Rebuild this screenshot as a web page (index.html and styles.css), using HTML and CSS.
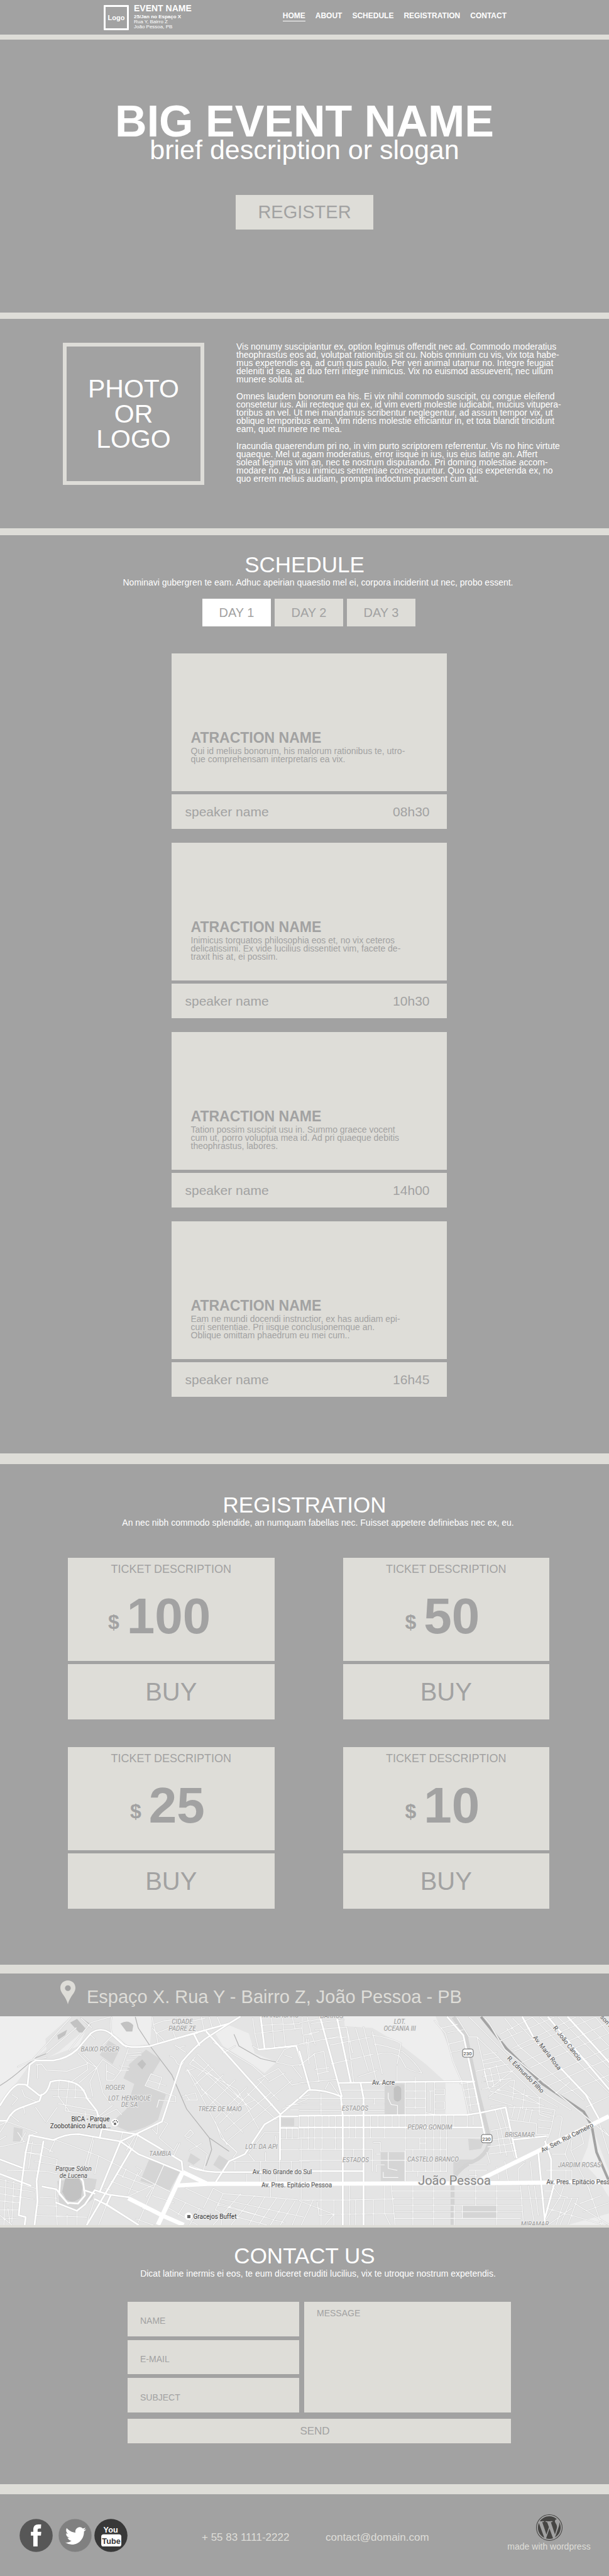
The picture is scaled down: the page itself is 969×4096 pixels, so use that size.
FILE: index.html
```html
<!DOCTYPE html>
<html lang="en">
<head>
<meta charset="utf-8">
<meta name="viewport" content="width=device-width, initial-scale=1">
<title>Big Event Name</title>
<link rel="stylesheet" href="styles.css">
</head>
<body>
<header class="site-header">
  <div class="brand">
    <div class="brand-logo">Logo</div>
    <div>
      <p class="brand-name">EVENT NAME</p>
      <p class="brand-info"><strong>25/Jan no Espaço X</strong><br>Rua Y, Bairro Z<br>João Pessoa, PB</p>
    </div>
  </div>
  <nav class="nav">
    <a class="nav-link nav-link-active" href="#home">HOME</a>
    <a class="nav-link" href="#about">ABOUT</a>
    <a class="nav-link" href="#schedule">SCHEDULE</a>
    <a class="nav-link" href="#registration">REGISTRATION</a>
    <a class="nav-link" href="#contact">CONTACT</a>
  </nav>
</header>
<main>
<section class="hero" id="home">
  <h1 class="hero-title">BIG EVENT NAME</h1>
  <p class="hero-slogan">brief description or slogan</p>
  <button class="hero-button" type="button">REGISTER</button>
</section>

<section class="about" id="about">
  <div class="about-photo">PHOTO<br>OR<br>LOGO</div>
  <div class="about-text">
    <p>Vis nonumy suscipiantur ex, option legimus offendit nec ad. Commodo moderatius<br>theophrastus eos ad, volutpat rationibus sit cu. Nobis omnium cu vis, vix tota habe-<br>mus expetendis ea, ad cum quis paulo. Per veri animal utamur no. Integre feugiat<br>deleniti id sea, ad duo ferri integre inimicus. Vix no euismod assueverit, nec ullum<br>munere soluta at.</p>
    <p>Omnes laudem bonorum ea his. Ei vix nihil commodo suscipit, cu congue eleifend<br>consetetur ius. Alii recteque qui ex, id vim everti molestie iudicabit, mucius vitupera-<br>toribus an vel. Ut mei mandamus scribentur neglegentur, ad assum tempor vix, ut<br>oblique temporibus eam. Vim ridens molestie efficiantur in, et tota blandit tincidunt<br>eam, quot munere ne mea.</p>
    <p>Iracundia quaerendum pri no, in vim purto scriptorem referrentur. Vis no hinc virtute<br>quaeque. Mel ut agam moderatius, error iisque in ius, ius eius latine an. Affert<br>soleat legimus vim an, nec te nostrum disputando. Pri doming molestiae accom-<br>modare no. An usu inimicus sententiae consequuntur. Quo quis expetenda ex, no<br>quo errem melius audiam, prompta indoctum praesent cum at.</p>
  </div>
</section>

<section class="schedule" id="schedule">
  <h2 class="heading">SCHEDULE</h2>
  <p class="subheading">Nominavi gubergren te eam. Adhuc apeirian quaestio mel ei, corpora inciderint ut nec, probo essent.</p>
  <div class="days">
    <button class="day day-active" type="button">DAY 1</button>
    <button class="day" type="button">DAY 2</button>
    <button class="day" type="button">DAY 3</button>
  </div>
  <div class="talks">
    <article class="talk">
      <div class="talk-body"><h3 class="talk-title">ATRACTION NAME</h3><p class="talk-text">Qui id melius bonorum, his malorum rationibus te, utro-<br>que comprehensam interpretaris ea vix.</p></div>
      <div class="talk-foot"><span>speaker name</span><time>08h30</time></div>
    </article>
    <article class="talk">
      <div class="talk-body"><h3 class="talk-title">ATRACTION NAME</h3><p class="talk-text">Inimicus torquatos philosophia eos et, no vix ceteros<br>delicatissimi. Ex vide lucilius dissentiet vim, facete de-<br>traxit his at, ei possim.</p></div>
      <div class="talk-foot"><span>speaker name</span><time>10h30</time></div>
    </article>
    <article class="talk">
      <div class="talk-body"><h3 class="talk-title">ATRACTION NAME</h3><p class="talk-text">Tation possim suscipit usu in. Summo graece vocent<br>cum ut, porro voluptua mea id. Ad pri quaeque debitis<br>theophrastus, labores.</p></div>
      <div class="talk-foot"><span>speaker name</span><time>14h00</time></div>
    </article>
    <article class="talk">
      <div class="talk-body"><h3 class="talk-title">ATRACTION NAME</h3><p class="talk-text">Eam ne mundi docendi instructior, ex has audiam epi-<br>curi sententiae. Pri iisque conclusionemque an.<br>Oblique omittam phaedrum eu mei cum..</p></div>
      <div class="talk-foot"><span>speaker name</span><time>16h45</time></div>
    </article>
  </div>
</section>

<section class="registration" id="registration">
  <h2 class="heading">REGISTRATION</h2>
  <p class="subheading">An nec nibh commodo splendide, an numquam fabellas nec. Fuisset appetere definiebas nec ex, eu.</p>
  <div class="tickets">
    <article class="ticket">
      <div class="ticket-body"><h3 class="ticket-title">TICKET DESCRIPTION</h3><p class="price price-long"><span class="currency">$</span>100</p></div>
      <button class="buy" type="button">BUY</button>
    </article>
    <article class="ticket">
      <div class="ticket-body"><h3 class="ticket-title">TICKET DESCRIPTION</h3><p class="price"><span class="currency">$</span>50</p></div>
      <button class="buy" type="button">BUY</button>
    </article>
    <article class="ticket">
      <div class="ticket-body"><h3 class="ticket-title">TICKET DESCRIPTION</h3><p class="price"><span class="currency">$</span>25</p></div>
      <button class="buy" type="button">BUY</button>
    </article>
    <article class="ticket">
      <div class="ticket-body"><h3 class="ticket-title">TICKET DESCRIPTION</h3><p class="price"><span class="currency">$</span>10</p></div>
      <button class="buy" type="button">BUY</button>
    </article>
  </div>
</section>

<section class="location">
  <div class="address">
    <svg class="pin" viewBox="0 0 78 134" preserveAspectRatio="none" aria-hidden="true"><path fill="#deddd8" fill-rule="evenodd" d="M39 0C17 0 0 18 0 41c0 20 12 33 22 51 9 16 14 28 17 42 3-14 8-26 17-42 10-18 22-31 22-51C78 18 61 0 39 0zm0 27a15 16 0 1 1 0 32 15 16 0 0 1 0-32z"/></svg>
    <p class="address-text">Espaço X. Rua Y - Bairro Z, João Pessoa - PB</p>
  </div>
  <svg class="map" viewBox="0 0 969 332" role="img" aria-label="Map of João Pessoa">
    <defs>
      <g id="west-minor">
        <path d="M170 570L360 340M235 540L385 400M350 525L460 370L560 338M410 345L465 400M90 615L170 575L235 563M565 340Q555 400 570 440L520 495M570 440Q600 450 640 510M455 435L480 460M770 338Q780 400 790 430L800 485M780 380L830 360L960 345M770 400L830 470M870 400L890 460M900 340L920 390M960 345L1000 430M1020 340L1035 420M1060 340L1075 400M1100 340L1120 390M800 485L1000 430M790 430L900 380L1040 345M885 495L940 535M895 515L935 500M860 555Q885 560 895 595Q915 620 930 590"/>
        <path d="M395 540L440 590L445 630L360 700M440 590L490 620L400 705M420 545L490 620L520 760L560 820M490 620L455 700L470 780M180 605L210 600L235 635L340 640L440 600M190 605L190 680M350 690L330 860M300 690L295 780L350 860M385 710L380 790M250 740L430 745M270 780L460 790M295 820L490 860M180 840L230 920M110 740L125 780L185 810M60 770L90 790L60 830M120 840L125 875M50 880L95 920M235 925L290 840M330 860L500 890M430 860L440 930"/>
        <path d="M640 540L715 535M650 555L715 550M640 580L680 575M610 610L655 618M610 635L650 635M650 515L610 640L575 690M490 620L520 575L610 640M540 600L540 690L575 690M540 640L580 660M500 890L570 830M510 895L590 850L615 880M765 655L820 675L800 740M750 690L840 720M765 655L735 720L860 770L890 780L890 810L850 805M795 840L805 800L850 805M630 430"/>
        <path d="M945 625L1150 1050M945 625L1060 790M960 600L1200 740M975 575L1225 800M1000 545L1270 850M940 640L985 625M1020 780L1130 660M1060 830L1190 690M1090 900L1250 730M1110 930L1340 680M1140 970L1370 760M1150 1030L1380 820M1080 480L1280 610L1360 690M1000 670L1060 600M980 720L1080 625M960 600L990 560M1060 790L1230 980M1200 740L1310 960M1020 740L1180 880M1150 870L1290 800M1040 650L1210 820M1090 920L1120 1010L1200 1090M1300 690L1410 625L1480 720M1360 700L1440 650M1250 760L1400 910M1130 540L1190 500M1370 790L1480 690M1310 690L1410 800M925 780L990 760L1000 800L940 800M940 770L960 800"/>
        <path d="M1280 345L1290 430L1310 520L1500 495L1568 485M1310 520L1280 500M1290 430L1530 400L1540 490M1375 340L1390 510M1430 340L1445 505M1480 340L1495 410M1530 340L1530 400M1320 385L1520 375M1400 590L1440 520L1500 495M1440 550L1480 565M1400 590L1480 610L1530 680M1480 610L1530 600M1560 460L1568 560M1430 850L1568 790M1450 830L1568 820M1470 855L1568 855M1510 790L1568 770M1480 715L1568 700"/>
        <path d="M0 1060L130 1030M130 1090L220 1110L290 1130L280 1200M280 1020L500 1110L880 1320M280 1020L250 1090M175 1140L290 1160L390 1170M165 1030L145 1180M210 1080L185 1240M140 1040L210 1050M140 1090L205 1100M220 1060L270 1090M0 980L35 920L0 940M35 920L190 980L140 1000M0 1020L30 1000M90 980L120 1030M130 980L105 1030M470 1010L420 1200M475 1020L440 1190M500 1110L480 1210M620 980L610 1030M690 990L640 1080M700 990L670 1075L640 1030M850 930L805 1010L880 1080L900 1040M850 930L830 920M770 960L795 990L800 930M935 1000L965 965L980 985L955 1010zM940 1010L1050 1100M960 1080L1020 1040M1050 1100L1030 1190L960 1160M880 1110L910 1040M1120 1010L1200 1090L1180 1120M1340 980L1260 1090M1340 980L1415 980M1345 1090L1345 1140M1260 1100L1290 1140M1395 1000L1400 1050"/>
        <path d="M0 1240L180 1290M0 1280L170 1310M0 1320L170 1350M0 1360L100 1370M0 1410L90 1410M0 1460L110 1455M35 1190L230 1195L290 1210M30 1240L20 1493M70 1250L60 1480M0 1440L60 1493M40 1400L50 1480M280 1300L290 1493M200 1340L290 1345M190 1385L290 1390M180 1440L440 1450M390 1415L390 1493M340 1440L340 1493M450 1450L440 1493M590 1210L780 1290M560 1250L700 1310M530 1290L560 1300M700 1200L650 1320M640 1180L620 1230M690 1170L720 1190L700 1220M830 1160L700 1480M780 1270L640 1340M770 1290L740 1340M540 1380L500 1493M480 1350L450 1450M500 1360L700 1493M770 1330L880 1370M720 1400L820 1440M690 1460L790 1500"/>
        <path d="M870 1335L1100 1450M840 1390L1000 1493M940 1370L900 1440M1010 1400L960 1493M1080 1290L1130 1320L1370 1340L1568 1360M940 1290L1100 1370L1400 1470M1080 1290L1030 1400M1130 1320L1090 1410Q1130 1420 1120 1493M1220 1320L1080 1493M1290 1330L1170 1493M1340 1340L1260 1493M1400 1345L1310 1493M1450 1350L1370 1493M1500 1350L1420 1493M1530 1360L1480 1493M1370 1340L1370 1280M1100 1380L1440 1480M1120 1350L1540 1450M1130 1430L1350 1493M1250 1210L1250 1260M1320 1210L1320 1260M1400 1210L1400 1260M1190 1140L1190 1190M1320 1140L1320 1200M1180 1140L1568 1140M1415 1015L1568 1015M1415 1075L1568 1075M1450 950L1450 1015M1480 950L1480 1015M1510 950L1510 1015M1540 950L1540 1015M1415 1130L1415 1200M1475 1140L1475 1200M1525 1020L1525 1350"/>
      </g>
      <g id="west-major">
        <path d="M0 830Q60 720 95 712L130 715L200 775Q240 770 255 700Q300 680 360 700Q420 715 440 790L490 860L515 960L505 1010M35 915Q60 860 100 845L200 805L210 770M0 915H35M140 715L150 605L180 580L270 580Q340 570 390 520L460 430Q510 390 560 430L620 490Q650 515 760 500L980 430L1160 375L1215 338"/>
        <path d="M130 1090L150 995L270 1022Q340 985 400 990L610 1030L820 920L920 590Q980 510 1040 460L1160 375M980 430L1010 495M1045 420L1420 880M515 960L690 990L920 1140L925 1190M610 1030L700 1100L925 1200M610 1030L505 1310M665 1075L440 1493M1420 880L1568 740M1420 885L1340 935L1240 1100L1160 1140L1090 1260M1420 890L1568 890M1418 890V955H1568M1418 955V1130M1320 340L1340 515M1310 520L1500 500M1500 500L1568 720M960 1170Q1010 1195 1090 1200H1568"/>
        <path d="M0 1130L110 1175M0 1210L155 1275M215 1280L285 1295L340 1370L395 1375L430 1330L420 1250Q410 1230 390 1215M220 1030L185 1250L190 1360L175 1493M130 1090L110 1260L95 1440L130 1450L125 1493M285 1370L390 1415L430 1380L480 1300L550 1325L650 1340M425 1300L480 1320M540 1380L700 1493M480 1350L540 1380L560 1330M305 1240L300 1320L345 1375"/>
      </g>
      <g id="west-trunk"><path d="M890 1275L1050 1265H1568M925 1200L800 1493M925 1200L1050 1265M650 1345L820 1440L930 1493"/></g>
      <g id="east-minor">
        <path d="M0 370L110 350M20 440L100 420M0 490L140 460L240 450M40 340L60 430L80 490M60 375L225 355M80 410L240 395L275 700M120 465L205 445M0 610L80 540L125 530L140 640M75 540L100 700M35 460L50 600M80 630L150 620M90 655L150 640M155 495L360 450M160 600L375 545M0 705L45 700L190 685M285 400L350 640M325 395L390 690M240 400L270 540M370 420L420 655M370 440Q450 450 515 485L495 600M380 490Q450 500 520 530Q590 590 620 650M400 545Q470 530 510 560L540 620Q570 640 620 650M300 670L395 635M495 610V695"/>
        <path d="M0 790H215M0 823H430M0 857H430M215 745H430M215 790H430M380 790V823M110 760V880M150 700L130 740M155 700L200 770M0 887V950M45 887V1075M78 887V1075M115 887V1075M150 887V950M182 887V1075M252 887V1010M285 887V1010M360 887V1010M398 887V950M432 887V1010M470 887V950M505 887V950M585 887V950M640 700V1200M680 887V1200M715 887V1200M745 887V1200M782 887V950M850 887V950M880 887V940M0 1010H930M0 1073H370V1195M0 1135H600M110 1075V1493M275 1075V1135M537 700V1250M537 750H640M537 790H640M537 840H640M587 670V850M537 1075H745M537 1195H745M600 1195V1225M610 1010V1075M610 1040H640M575 1075V1195"/>
        <path d="M640 705V870L685 880V700M685 740H735V770H685M685 810H735V850H685M665 750V860M655 750H680M375 1035L410 1035V1085M390 1100H410M410 1085H535V1250M450 1090V1180L495 1190M390 1160H430M390 1200V1160M425 1200V1230H500M450 760V790L465 825L497 830V880M0 1355L210 1355L480 1350M0 1360L175 1435L480 1430M70 1355L10 1493M90 1365L100 1440L175 1435L130 1493M175 1355V1493M255 1265V1493M285 1355V1493M375 1355V1493M432 1265V1430L460 1493M465 1275L485 1493M470 1305H1120M475 1345H1410M480 1385H1130M485 1420H1130M485 1457H1120M575 1275V1493M680 1275V1493M893 1275V1385M1000 1275V1493M785 1385V1493M825 1385V1457"/>
        <path d="M685 360L740 430L780 590L820 690L860 880M720 400L800 380M750 425L830 410M755 490L830 470M770 535L850 515M815 710L885 700M830 745L890 735M840 785L900 780M855 830L910 820M850 700L870 860M800 345L860 450L900 450L960 740L1100 620M860 340L1100 600L1250 770L1375 855M900 450L1000 555L1085 650L1210 780L1310 840M930 550L1000 535M930 580L1010 560M935 600L1025 580M895 640L1060 600M930 670L1070 640M925 700L1075 680M925 740L1010 720M935 640L960 740M965 620L985 720M995 600L1020 700M960 780L1070 690L1090 690L1080 800M960 790L1080 830M965 750L1240 830M1000 740L1220 790M1060 720L1215 820M1140 740L1130 850L1280 870M970 835L1050 830"/>
        <path d="M1215 790V880L1270 900M1090 835L1075 900M1120 840L1105 910M1150 845L1135 915M1180 850L1165 920M1060 840H1220L1295 855L1275 960L1210 950M1220 870L1290 890M1210 910L1280 920M1060 910L1200 930V990M990 850L1020 960L1050 1110M1020 850L1050 960L1090 1120M970 970L1060 950M965 1020L1080 1010M955 1060L1090 1040M960 1100L1100 1080M1000 960L1020 1100M965 1150L950 1090M1200 990H1260L1240 1060M1275 960L1260 1010M1300 890Q1335 880 1330 910L1310 1040M1380 1020L1375 1080L1420 1190L1470 1300M1420 960L1440 1040L1380 1080M1370 1020L1345 1100L1380 1180M1280 1100L1350 1100M1320 1190H1380V1240M1350 1190V1240M1250 1190H1320M860 1190H950M860 1160H950M860 1220H900M893 1190V1240M1110 1180V1265M1140 1150L1110 1180M1170 1140L1180 1265M1100 1120L1140 1140M1040 1140L1060 1265M1000 1170L1010 1240"/>
        <path d="M1120 1275L1135 1493M1160 1275L1190 1493M1190 1275L1210 1440M1240 1305H1280M1340 1275L1320 1340L1250 1460M1280 1275L1320 1330L1360 1340M1380 1345L1320 1493M1410 1345L1360 1493M1460 1275L1530 1493M1420 1375L1530 1330M1440 1420L1568 1370M1390 1370L1568 1493M1250 1400L1568 1500M1380 1400L1260 1493M1345 1350L1300 1493"/>
        <path d="M940 345L960 370L1040 520L1568 1000M1015 435L1180 340M1020 470L1290 340M1075 515L1400 340M1085 530L1500 340M1130 590L1568 370M1170 620L1568 430M1210 690L1568 510M1260 720L1568 570M1330 770L1568 660M1450 840L1568 780M1080 345L1480 800M1180 340L1568 760M1220 340L1568 700M1310 340L1568 620M1420 340L1568 500M1500 340L1568 430M1050 400L1110 500L1440 800M1040 345L1100 430M1300 760L1370 700M1520 930L1568 1100M1540 960L1568 1000"/>
      </g>
      <g id="east-major">
        <path d="M0 530L55 745M0 790L45 745Q120 740 210 780L220 890V1493M105 340L215 780M190 340L260 700M310 705L325 790V1493M200 705L500 700L820 697H885M0 887L850 882L920 870L1045 840L1100 1120M0 952H930M0 1195H325M750 340L830 440L890 740L940 1000M1130 340L1200 480L1450 770L1515 900M1260 340L1568 740M1360 340L1568 590M1210 1090L1245 1493M1245 1030L1275 1130V1265M1290 1270L1245 1450M1085 1020L1250 1000"/>
      </g>
      <g id="east-trunk"><path d="M0 1265L900 1262L1568 1255M900 1250L1568 890"/></g>
    </defs>
    <rect class="map-land" width="969" height="332"/>
    <g transform="scale(.3142 .2864) translate(0 -335)">
      <path class="map-open" d="M0 335H360L230 460L235 520L170 570L120 650L0 830zM400 335H770L760 490L650 500L560 420L560 335zM250 560L400 500L440 400L300 530zM1090 430L1160 385L1260 430L1290 540L1400 590L1340 650L1260 590L1130 500z"/>
      <path class="map-park" d="M740 520L815 575L735 720L840 770L800 910Q740 960 650 975L560 930L640 850L680 710L625 680L655 600zM550 470L610 510L570 600L505 550zM755 1130L910 1200L860 1300L710 1250zM70 950L115 960L110 1030L65 1030zM430 1230L490 1240L470 1350L390 1415L300 1370L290 1250zM1425 900H1490V945H1425zM1110 1105L1160 1140L1120 1190L1080 1160zM965 1095L1015 1130L980 1160L950 1140z"/>
      <path class="map-block" d="M355 370L390 350L435 405L425 425L400 425zM405 338L460 380L450 395zM610 375Q650 350 675 385L670 420L640 420zM720 575L740 600L720 630L695 600zM290 440L340 410L330 440L295 465zM330 1235Q365 1225 400 1235L418 1280L410 1340Q370 1380 335 1350L315 1310z"/>
      <path class="map-rail" d="M685 338L700 400L760 500L870 660L945 850L1060 1010L1072 1075L1043 1165M1060 1010L1160 1085M1185 435L1210 500L1320 570L1400 590M0 720Q60 680 120 620L180 565L240 540"/>
      <use href="#west-minor" class="road-minor-case"/><use href="#west-major" class="road-major-case"/>
      <use href="#west-minor" class="road-minor"/><use href="#west-major" class="road-major"/><use href="#west-trunk" class="road-trunk"/>
    </g>
    <g transform="translate(476.3 0) scale(.3142 .2864) translate(0 -335)">
      <rect class="map-land" x="52" y="335" width="1520" height="1170"/>
      <path class="map-open" d="M225 335H690L770 540L820 690L850 875L740 880L740 700L640 600L510 490L370 400L230 390zM1480 940L1568 1200V1340L1500 1220L1430 1140L1460 1060zM1360 1493L1568 1430V1493z"/>
      <path class="map-park" d="M432 710H532V880H432zM412 1090H532V1250H412zM855 1015L940 1020L920 1070L860 1080zM780 1130H880L800 1220H780zM830 1385H1000V1457H830z"/>
      <rect class="map-block" x="478" y="722" width="38" height="86" rx="19"/>
      <path class="map-highway" d="M780 340L840 430L900 740L960 1000Q970 1080 900 1130Q780 1190 776 1265V1493"/>
      <path class="map-river" d="M920 338L1050 515L1230 710L1440 865L1480 940L1505 1090L1568 1250"/>
      <use href="#east-minor" class="road-minor-case"/><use href="#east-major" class="road-major-case"/>
      <use href="#east-minor" class="road-minor"/><use href="#east-major" class="road-major"/><use href="#east-trunk" class="road-trunk"/>
    </g>
    <g class="map-area">
      <text x="290" y="12">CIDADE</text><text x="290" y="23">PADRE ZE</text><text x="159" y="56">BAIXO ROGER</text>
      <text x="183" y="117">ROGER</text><text x="206" y="134">LOT. HENRIQUE</text><text x="206" y="144">DE SA</text>
      <text x="350" y="151">TREZE DE MAIO</text><text x="255" y="222">TAMBIA</text><text x="416" y="211">LOT. DA API</text>
      <text x="446" y="2">MANDACARU</text><text x="528" y="3">BARROS</text>
      <text x="636" y="12">LOT.</text><text x="636" y="23">OCEANIA III</text><text x="565" y="150">ESTADOS</text>
      <text x="684" y="180">PEDRO GONDIM</text><text x="566" y="232">ESTADOS</text><text x="689" y="231">CASTELO BRANCO</text>
      <text x="827" y="192">BRISAMAR</text><text x="922" y="240">JARDIM ROSAS</text><text x="851" y="334">MIRAMAR</text>
    </g>
    <g class="map-street">
      <text x="449" y="251">Av. Rio Grande do Sul</text><text x="472" y="272">Av. Pres. Epitácio Pessoa</text>
      <text x="610" y="109">Av. Acre</text><text x="920" y="267">Av. Pres. Epitácio Pess</text>
      <text transform="translate(868 60) rotate(52)">Av. Maria Rosa</text><text transform="translate(900 45) rotate(52)">R. João Câncio</text>
      <text transform="translate(834 95) rotate(45)">R. Edmundo Filho</text><text transform="translate(904 196) rotate(-27)">Av. Sen. Rui Carneiro</text>
      <text transform="translate(963 11) rotate(48)">son P</text>
    </g>
    <g class="map-place">
      <text x="144" y="167">BICA - Parque</text><text x="128" y="178">Zoobotânico Arruda...</text><text x="342" y="322">Gracejos Buffet</text>
      <text class="map-italic" x="117" y="246">Parque Sólon</text><text class="map-italic" x="117" y="257">de Lucena</text>
    </g>
    <text class="map-city" x="723" y="268">João Pessoa</text>
    <circle cx="183" cy="169" r="6" fill="#fff"/><ellipse cx="183" cy="171" rx="2" ry="2" fill="#666"/><circle cx="180" cy="168" r="1" fill="#666"/><circle cx="182" cy="166" r="1" fill="#666"/><circle cx="185" cy="166" r="1" fill="#666"/><circle cx="187" cy="168" r="1" fill="#666"/>
    <circle cx="300" cy="318" r="6" fill="#fff"/><rect x="298" y="316" width="5" height="5" fill="#666"/>
    <g class="shield"><rect x="736" y="52" width="17" height="13" rx="3"/><text x="744" y="62">230</text><rect x="766" y="188" width="17" height="13" rx="3"/><text x="774" y="198">230</text></g>
  </svg>
</section>

<section class="contact" id="contact">
  <h2 class="heading">CONTACT US</h2>
  <p class="subheading">Dicat latine inermis ei eos, te eum diceret eruditi lucilius, vix te utroque nostrum expetendis.</p>
  <form class="form">
    <div class="fields">
      <label class="field"><span>NAME</span><input class="control" type="text" name="name"></label>
      <label class="field"><span>E-MAIL</span><input class="control" type="email" name="email"></label>
      <label class="field"><span>SUBJECT</span><input class="control" type="text" name="subject"></label>
    </div>
    <label class="message"><span>MESSAGE</span><textarea class="control" name="message"></textarea></label>
    <button class="send" type="submit">SEND</button>
  </form>
</section>
</main>

<footer class="site-footer">
  <div class="social">
    <a href="#facebook" aria-label="Facebook"><svg class="social-icon" viewBox="48 63 292 292"><circle cx="194" cy="209" r="145" fill="#575757"/><path fill="#fff" d="M169 306V210h-21v-33h21v-18c0-32 16-47 43-47h26l-2 36h-17c-9 0-12 5-12 13v16h32l-3 33h-29v96z"/></svg></a>
    <a class="social-twitter" href="#twitter" aria-label="Twitter"><svg class="social-icon" viewBox="392 61 292 292"><circle cx="538" cy="207" r="145" fill="#808080" stroke="#999" stroke-width="2"/><path fill="#fff" transform="translate(452 117) scale(7.6 7.8)" d="M23.953 4.57a10 10 0 01-2.825.775 4.958 4.958 0 002.163-2.723c-.951.555-2.005.959-3.127 1.184a4.92 4.92 0 00-8.384 4.482C7.69 8.095 4.067 6.13 1.64 3.162a4.822 4.822 0 00-.666 2.475c0 1.71.87 3.213 2.188 4.096a4.904 4.904 0 01-2.228-.616v.06a4.923 4.923 0 003.946 4.827 4.996 4.996 0 01-2.212.085 4.936 4.936 0 004.604 3.417 9.867 9.867 0 01-6.102 2.105c-.39 0-.779-.023-1.17-.067a13.995 13.995 0 007.557 2.209c9.053 0 13.998-7.496 13.998-13.985 0-.21 0-.42-.015-.63A9.935 9.935 0 0024 4.59z"/></svg></a>
    <a href="#youtube" aria-label="YouTube"><svg class="social-icon" viewBox="711 63 292 292"><circle cx="857" cy="209" r="145" fill="#383838"/><rect x="772" y="199" width="176" height="107" rx="20" fill="#fff"/><text class="tube" x="855" y="186" fill="#fff">You</text><text class="tube" x="860" y="281" fill="#383838">Tube</text></svg></a>
  </div>
  <p class="footer-text">+ 55 83 1111-2222</p>
  <a class="footer-text" href="mailto:contact@domain.com">contact@domain.com</a>
  <div class="credit">
    <svg class="credit-icon" viewBox="0 0 24 24" aria-hidden="true"><circle cx="12" cy="12" r="11.7" fill="none" stroke="#464543" stroke-width=".6"/><path fill="#464543" transform="translate(.5 .5) scale(.958)" d="M21.469 6.825c.84 1.537 1.318 3.3 1.318 5.175 0 3.979-2.156 7.456-5.363 9.325l3.295-9.527c.615-1.54.82-2.771.82-3.864 0-.405-.026-.78-.07-1.11m-7.981.105c.647-.03 1.232-.105 1.232-.105.582-.075.514-.93-.067-.899 0 0-1.755.135-2.88.135-1.064 0-2.85-.15-2.85-.15-.585-.03-.661.855-.075.885 0 0 .54.061 1.125.09l1.68 4.605-2.37 7.08L5.354 6.9c.649-.03 1.234-.1 1.234-.1.585-.075.516-.93-.065-.896 0 0-1.746.138-2.874.138-.2 0-.438-.008-.69-.015C4.911 3.15 8.235 1.215 12 1.215c2.809 0 5.365 1.072 7.286 2.833-.046-.003-.091-.009-.141-.009-1.06 0-1.812.923-1.812 1.914 0 .89.513 1.643 1.06 2.531.411.72.89 1.643.89 2.977 0 .915-.354 1.994-.821 3.479l-1.075 3.585-3.9-11.61zM12 22.784c-1.059 0-2.081-.153-3.048-.437l3.237-9.406 3.315 9.087c.024.053.05.101.078.149-1.12.393-2.325.609-3.582.609M1.211 12c0-1.564.336-3.05.935-4.39L7.29 21.709C3.694 19.96 1.212 16.271 1.211 12"/></svg>
    <p class="credit-text">made with wordpress</p>
  </div>
</footer>
</body>
</html>
```
FILE: styles.css
```css
:root {
  --grey: #a2a2a2;
  --cream: #deddd8;
}

* { box-sizing: border-box; }

body {
  margin: 0;
  background: var(--grey);
  color: #fff;
  font-family: "Liberation Sans", Arial, sans-serif;
}

h1, h2, h3, p { margin: 0; }

a { color: inherit; text-decoration: none; }

button, input, textarea {
  border: 0;
  border-radius: 0;
  padding: 0;
  font-family: inherit;
  color: var(--grey);
  background: var(--cream);
}

button { cursor: pointer; }

/* Header */
.site-header {
  display: flex;
  justify-content: space-between;
  padding: 0 163px 0 165px;
  min-height: 63px;
  border-bottom: 8px solid var(--cream);
}

.brand { display: flex; gap: 8px; padding-top: 6px; }

.brand-logo {
  display: flex;
  align-items: center;
  justify-content: center;
  width: 40px;
  height: 40px;
  margin-top: 2px;
  border: 3px solid #fff;
  border-radius: 1px;
  font-size: 11px;
  font-weight: bold;
}

.brand-name { font-size: 14px; line-height: 14px; font-weight: bold; }
.brand-info { margin-top: 3px; font-size: 8px; line-height: 8px; }

.nav { display: flex; align-items: flex-start; gap: 16px; padding-top: 18px; }

.nav-link {
  padding-bottom: 1px;
  border-bottom: 1px solid transparent;
  font-size: 12px;
  line-height: 14px;
  font-weight: bold;
}

.nav-link-active { border-color: #fff; }

/* Hero */
.hero {
  display: flex;
  flex-direction: column;
  align-items: center;
  padding: 101px 0 132px;
  border-bottom: 10px solid var(--cream);
  text-align: center;
}

.hero-title { font-size: 70px; line-height: 58px; }
.hero-slogan { font-size: 43px; line-height: 32px; }

.hero-button {
  width: 219px;
  height: 55px;
  margin-top: 56px;
  font-size: 29px;
}

/* About */
.about {
  display: flex;
  gap: 51px;
  padding: 38px 40px 69px 100px;
  border-bottom: 11px solid var(--cream);
}

.about-photo {
  display: flex;
  flex: none;
  align-items: center;
  justify-content: center;
  width: 225px;
  height: 226px;
  border: 6px solid var(--cream);
  font-size: 41px;
  line-height: 40px;
  text-align: center;
}

.about-text {
  display: flex;
  flex-direction: column;
  gap: 14px;
  font-size: 14px;
  line-height: 13px;
  white-space: nowrap;
}

/* Section headings */
.heading {
  font-size: 35px;
  line-height: 40px;
  font-weight: normal;
  text-align: center;
}

.subheading {
  padding-left: 43px;
  font-size: 14px;
  line-height: 16px;
  text-align: center;
}

/* Schedule */
.schedule { padding: 27px 0 90px; border-bottom: 17px solid var(--cream); }

.days {
  display: flex;
  justify-content: center;
  gap: 6px;
  margin-top: 18px;
  padding-left: 14px;
}

.day { width: 109px; height: 44px; font-size: 20px; }
.day-active { background: #fff; }

.talks {
  display: grid;
  grid-template-columns: minmax(0, 438px);
  justify-content: center;
  gap: 22px;
  margin-top: 43px;
  padding-left: 14px;
  color: var(--grey);
}

.talk { display: grid; gap: 5px; }

.talk-body {
  min-height: 219px;
  padding: 121px 28px 16px 31px;
  background: var(--cream);
}

.talk-title { font-size: 23px; line-height: 26px; }
.talk-text { margin-top: 2px; font-size: 14px; line-height: 13px; white-space: nowrap; }

.talk-foot {
  display: flex;
  align-items: center;
  justify-content: space-between;
  min-height: 55px;
  padding: 0 27px 0 22px;
  background: var(--cream);
  font-size: 21px;
}

/* Registration */
.registration { padding: 45px 0 89px; border-bottom: 14px solid var(--cream); }

.tickets {
  display: grid;
  grid-template-columns: 1fr 1fr;
  gap: 44px 109px;
  margin-top: 48px;
  padding: 0 95px 0 108px;
  color: var(--grey);
}

.ticket { display: grid; gap: 5px; }
.ticket-body { min-height: 164px; padding-top: 8px; background: var(--cream); }

.ticket-title {
  font-size: 18px;
  line-height: 20px;
  font-weight: normal;
  text-align: center;
}

.price {
  display: flex;
  align-items: flex-end;
  gap: 12px;
  margin-top: 25px;
  padding-left: 99px;
  font-size: 80px;
  line-height: 80px;
  font-weight: bold;
}

.price-long { padding-left: 64px; }
.currency { padding-bottom: 14px; font-size: 32px; line-height: 33px; }
.buy { height: 88px; font-size: 40px; }

/* Location */
.location { border-bottom: 4px solid var(--cream); }

.address {
  display: flex;
  align-items: center;
  gap: 18px;
  min-height: 68px;
  padding-left: 96px;
  color: var(--cream);
}

.pin { flex: none; width: 24px; height: 38px; margin-bottom: 9px; }
.address-text { padding-top: 6px; font-size: 29px; line-height: 32px; }

.map { display: block; width: 100%; font-family: Roboto, sans-serif; }
.map-land { fill: #e4e4e4; }
.map-open { fill: #eee; }
.map-park { fill: #d5d5d5; }
.map-block { fill: #c2c2c2; }
.map-rail { fill: none; stroke: #b4b4b4; stroke-width: 4px; }
.map-river { fill: none; stroke: #a3a3a3; stroke-width: 13px; }
.map-highway { fill: none; stroke: #d3d3d3; stroke-width: 20px; }

.road-minor-case, .road-major-case, .road-minor, .road-major, .road-trunk {
  fill: none;
  stroke-linejoin: round;
  stroke-linecap: round;
}

.road-minor-case { stroke: #d2d2d2; stroke-width: 8px; }
.road-major-case { stroke: #d2d2d2; stroke-width: 13px; }
.road-minor { stroke: #f9f9f9; stroke-width: 4px; }
.road-major { stroke: #fff; stroke-width: 9px; }
.road-trunk { stroke: #fff; stroke-width: 23px; stroke-linecap: butt; }

.map-area, .map-street, .map-place, .map-city { paint-order: stroke; stroke: #ececec; stroke-width: 2px; }
.map-area { fill: #999; font-size: 10px; font-style: italic; text-anchor: middle; }
.map-street { fill: #555; font-size: 10px; text-anchor: middle; }
.map-place { fill: #333; font-size: 10px; text-anchor: middle; }
.map-italic { font-style: italic; fill: #555; }
.map-city { fill: #888; font-size: 20px; text-anchor: middle; }
.shield rect { fill: #fff; stroke: #666; stroke-width: 1px; }
.shield text { fill: #333; font-size: 8px; text-anchor: middle; }

/* Contact */
.contact { padding: 25px 0 65px; border-bottom: 16px solid var(--cream); }

.form {
  display: grid;
  grid-template-columns: minmax(0, 273fr) minmax(0, 329fr);
  gap: 10px 8px;
  margin-top: 37px;
  padding: 0 156px 0 203px;
  color: var(--grey);
  font-size: 14px;
  line-height: 16px;
}

.fields { display: grid; grid-template-rows: repeat(3, 1fr); gap: 6px; min-height: 176px; }

.field {
  display: flex;
  align-items: center;
  gap: 8px;
  min-width: 0;
  padding: 6px 12px 0 20px;
  background: var(--cream);
}

.message {
  display: flex;
  flex-direction: column;
  min-width: 0;
  padding: 10px 20px;
  background: var(--cream);
}

.control { flex: 1; min-width: 0; background: transparent; font-size: 14px; outline: 0; resize: none; }

.send {
  grid-column: 1 / -1;
  height: 39px;
  padding-right: 14px;
  font-size: 17px;
}

/* Footer */
.site-footer {
  display: grid;
  grid-template-columns: 290fr 197fr 288fr 135fr;
  align-items: center;
  min-height: 131px;
  padding: 0 28px 0 31px;
  color: var(--cream);
}

.social { display: flex; }
.social-twitter { padding: 0 4px 0 9px; }
.social-icon { display: block; width: 53px; height: 53px; }
.tube { font-family: "Liberation Sans Narrow", "Liberation Sans", sans-serif; font-size: 70px; font-weight: bold; text-anchor: middle; }
.footer-text { padding-top: 6px; font-size: 17px; line-height: 20px; }

.credit { padding-bottom: 8px; text-align: center; white-space: nowrap; }
.credit-icon { display: block; width: 42px; height: 42px; margin: 0 auto 1px; }
.credit-text { font-size: 14px; line-height: 16px; }
```
